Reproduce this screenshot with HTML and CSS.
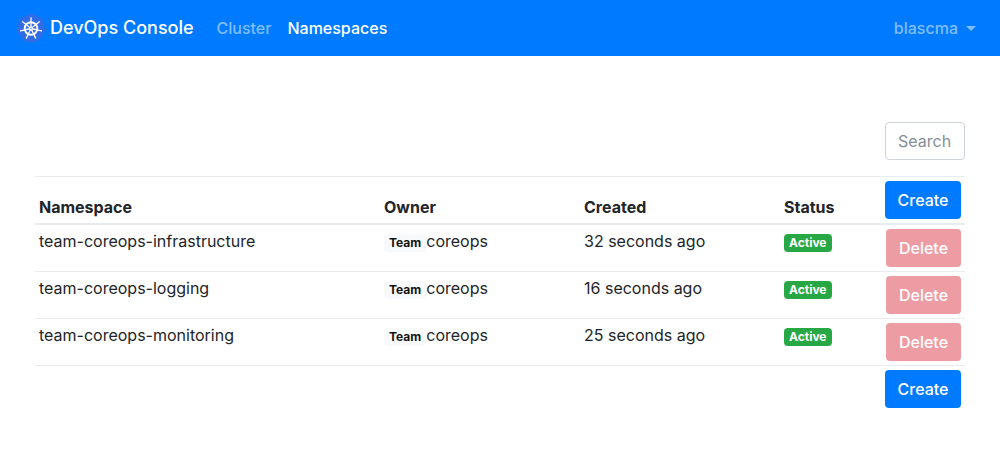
FILE: index.html
```html
<!DOCTYPE html>
<html lang="en">
<head>
<meta charset="utf-8">
<meta name="viewport" content="width=device-width, initial-scale=1">
<title>DevOps Console</title>
<link rel="stylesheet" href="styles.css">
</head>
<body>
<nav class="navbar">
  <a class="brand" href="#">
    <svg class="logo" viewBox="0 0 30 30" aria-hidden="true">
      <path d="M15 1 26 6.200 28.800 18.200 21.200 28 Q20.500 28.800 19.500 28.800H10.500Q9.500 28.800 8.800 28L1.200 18.200 4 6.200Z" fill="#326ce5" stroke="#326ce5" stroke-linejoin="round"/>
      <g fill="none" stroke="#fff" stroke-linecap="round">
        <circle cx="15" cy="15.500" r="6.300" stroke-width="1.900"/>
        <g stroke-width="1.300">
          <path d="M15 15.500V4.800"/>
          <path d="M15 15.500V4.800" transform="rotate(51.430 15 15.500)"/>
          <path d="M15 15.500V4.800" transform="rotate(102.860 15 15.500)"/>
          <path d="M15 15.500V4.800" transform="rotate(154.290 15 15.500)"/>
          <path d="M15 15.500V4.800" transform="rotate(205.710 15 15.500)"/>
          <path d="M15 15.500V4.800" transform="rotate(257.140 15 15.500)"/>
          <path d="M15 15.500V4.800" transform="rotate(308.570 15 15.500)"/>
        </g>
      </g>
      <circle cx="15" cy="15.500" r="1.900" fill="#fff"/>
      <circle cx="15" cy="15.500" r=".7" fill="#326ce5"/>
    </svg>
    <span>DevOps Console</span>
  </a>
  <a class="nav-link" href="#">Cluster</a>
  <a class="nav-link active" href="#" aria-current="page">Namespaces</a>
  <button class="nav-link user" type="button" aria-haspopup="true">blascma</button>
</nav>
<main class="content">
  <form class="search">
    <input class="search-input" type="text" placeholder="Search" aria-label="Search">
  </form>
  <table class="table">
    <colgroup>
      <col>
      <col class="col-wide">
      <col class="col-wide">
      <col class="col-status">
      <col class="col-action">
    </colgroup>
    <thead>
      <tr>
        <th scope="col">Namespace</th>
        <th scope="col">Owner</th>
        <th scope="col">Created</th>
        <th scope="col">Status</th>
        <th class="action"><button class="btn btn-primary" type="button">Create</button></th>
      </tr>
    </thead>
    <tbody>
      <tr>
        <td>team-coreops-infrastructure</td>
        <td><span class="badge badge-light">Team</span>coreops</td>
        <td>32 seconds ago</td>
        <td><span class="badge badge-success">Active</span></td>
        <td class="action"><button class="btn btn-danger" type="button" disabled>Delete</button></td>
      </tr>
      <tr>
        <td>team-coreops-logging</td>
        <td><span class="badge badge-light">Team</span>coreops</td>
        <td>16 seconds ago</td>
        <td><span class="badge badge-success">Active</span></td>
        <td class="action"><button class="btn btn-danger" type="button" disabled>Delete</button></td>
      </tr>
      <tr>
        <td>team-coreops-monitoring</td>
        <td><span class="badge badge-light">Team</span>coreops</td>
        <td>25 seconds ago</td>
        <td><span class="badge badge-success">Active</span></td>
        <td class="action"><button class="btn btn-danger" type="button" disabled>Delete</button></td>
      </tr>
    </tbody>
    <tfoot>
      <tr>
        <td colspan="4"></td>
        <td class="action"><button class="btn btn-primary" type="button">Create</button></td>
      </tr>
    </tfoot>
  </table>
</main>
</body>
</html>
```
FILE: styles.css
```css
*, *::before, *::after {
  box-sizing: border-box;
}

body {
  margin: 0;
  background: #fff;
  color: #212529;
  font: 16px/24px Inter, "Liberation Sans", sans-serif;
}

button, input {
  font: inherit;
}

.navbar {
  display: flex;
  align-items: center;
  height: 56px;
  padding: 0 16px;
  background: #007bff;
}

.brand {
  display: flex;
  align-items: center;
  gap: 4px;
  margin-right: 15px;
  color: #fff;
  font-size: 18px;
  font-weight: 500;
  text-decoration: none;
  white-space: nowrap;
}

.logo {
  width: 30px;
  height: 30px;
}

.nav-link {
  padding: 8px;
  border: 0;
  background: none;
  color: rgba(255, 255, 255, 0.5);
  font-weight: 500;
  text-decoration: none;
}

.nav-link.active {
  color: #fff;
}

.user {
  display: flex;
  align-items: center;
  gap: 8px;
  margin-left: auto;
}

.user::after {
  content: "";
  border-top: 5px solid;
  border-right: 5px solid transparent;
  border-left: 5px solid transparent;
}

.content {
  padding: 66px 35px 0;
}

.search {
  display: flex;
  justify-content: flex-end;
  margin-bottom: 16px;
}

.search-input {
  width: 80px;
  height: 38px;
  padding: 6px 12px;
  border: 1px solid #ced4da;
  border-radius: 4px;
  background: #fff;
  color: #495057;
}

.search-input::placeholder {
  color: #868e96;
  opacity: 1;
}

.table {
  width: 100%;
  table-layout: fixed;
  border-spacing: 0;
}

.col-wide {
  width: 200px;
}

.col-status {
  width: 101px;
}

.col-action {
  width: 84px;
}

th, td {
  padding: 4px;
  border-top: 1px solid #e9ecef;
  text-align: left;
  vertical-align: top;
}

th {
  border-bottom: 2px solid #e9ecef;
  font-weight: 700;
  vertical-align: bottom;
}

tbody tr:first-child td {
  border-top: 0;
}

.action {
  text-align: right;
}

.btn {
  display: block;
  height: 38px;
  margin-left: auto;
  padding: 6px 11px;
  border: 1px solid transparent;
  border-radius: 4px;
  color: #fff;
  font-weight: 500;
}

.btn-primary {
  width: 76px;
  background: #007bff;
}

.btn-danger {
  width: 75px;
  background: #ee9ca4;
}

.badge {
  display: inline-block;
  padding: 3px 5px;
  border-radius: 4px;
  font-size: 12px;
  font-weight: 700;
  line-height: 12px;
}

.badge-light {
  background: #f8f9fa;
  color: #111;
}

.badge-success {
  background: #28a745;
  color: #fff;
}
```
